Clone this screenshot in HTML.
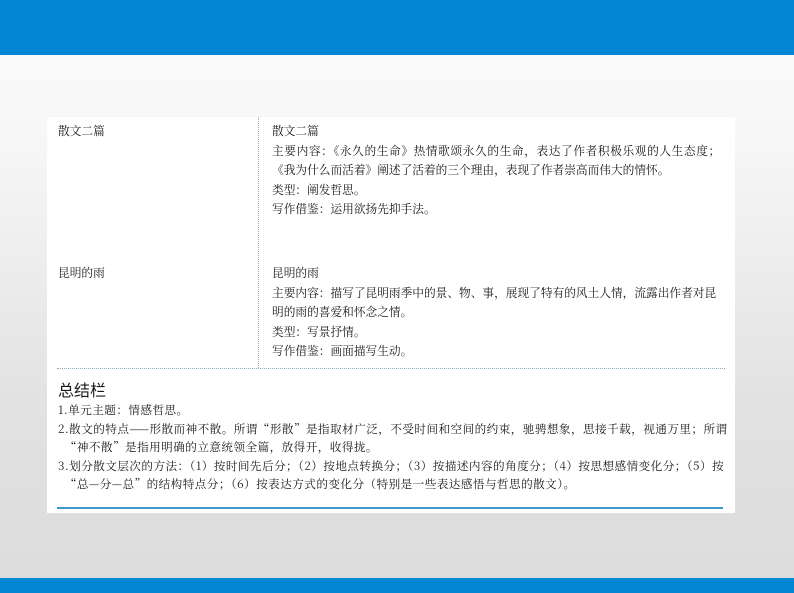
<!DOCTYPE html>
<html><head><meta charset="utf-8"><style>
body{margin:0;width:794px;height:593px;position:relative;overflow:hidden;
background:linear-gradient(#fdfdfd 0px,#f6f6f6 150px,#e2e2e2 400px,#dcdcdc 593px);
font-family:"Noto Serif CJK SC","Liberation Serif",serif;color:#1a1a1a;}
.top{position:absolute;left:0;top:0;width:794px;height:55px;background:#0387d4;}
.bot{position:absolute;left:0;top:578px;width:794px;height:15px;background:#0387d4;}
.card{position:absolute;left:47px;top:117px;width:688px;height:396px;background:#fff;}
.t{position:absolute;font-size:11.7px;line-height:19.5px;white-space:nowrap;}
.vl{position:absolute;left:211px;top:0;height:251px;border-left:1px dotted #8ab;}
.hl{position:absolute;left:10px;top:251px;width:668px;border-top:1px dotted #8ab;}
.bl{position:absolute;left:10px;top:390px;width:666px;border-top:2px solid #3a9ad0;}
</style></head><body>
<div class="top"></div>
<div class="card">
<div class="vl"></div><div class="hl"></div><div class="bl"></div>
<div class="t" style="left:11px;top:5px">散文二篇</div>
<div class="t" style="left:225px;top:5px">散文二篇<br><span style="letter-spacing:0.6px">主要内容：《永久的生命》热情歌颂永久的生命，表达了作者积极乐观的人生态度；</span><br>《我为什么而活着》阐述了活着的三个理由，表现了作者崇高而伟大的情怀。<br>类型：阐发哲思。<br>写作借鉴：运用欲扬先抑手法。</div>
<div class="t" style="left:11px;top:147px">昆明的雨</div>
<div class="t" style="left:225px;top:147px">昆明的雨<br>主要内容：描写了昆明雨季中的景、物、事，展现了特有的风土人情，流露出作者对昆<br>明的雨的喜爱和怀念之情。<br>类型：写景抒情。<br>写作借鉴：画面描写生动。</div>
<div class="t" style="left:11px;top:263px;font-size:16px;font-family:'Noto Sans CJK SC',sans-serif">总结栏</div>
<div class="t" style="left:11px;top:284px;font-size:11.6px;line-height:18.5px;letter-spacing:0.45px">1.单元主题：情感哲思。<br>2.散文的特点——形散而神不散。所谓“形散”是指取材广泛，不受时间和空间的约束，驰骋想象，思接千载，视通万里；所谓<br>&nbsp;&nbsp;“神不散”是指用明确的立意统领全篇，放得开，收得拢。<br>3.划分散文层次的方法：（1）按时间先后分；（2）按地点转换分；（3）按描述内容的角度分；（4）按思想感情变化分；（5）按<br>&nbsp;&nbsp;“总—分—总”的结构特点分；（6）按表达方式的变化分（特别是一些表达感悟与哲思的散文）。</div>
</div>
<div class="bot"></div>
</body></html>
